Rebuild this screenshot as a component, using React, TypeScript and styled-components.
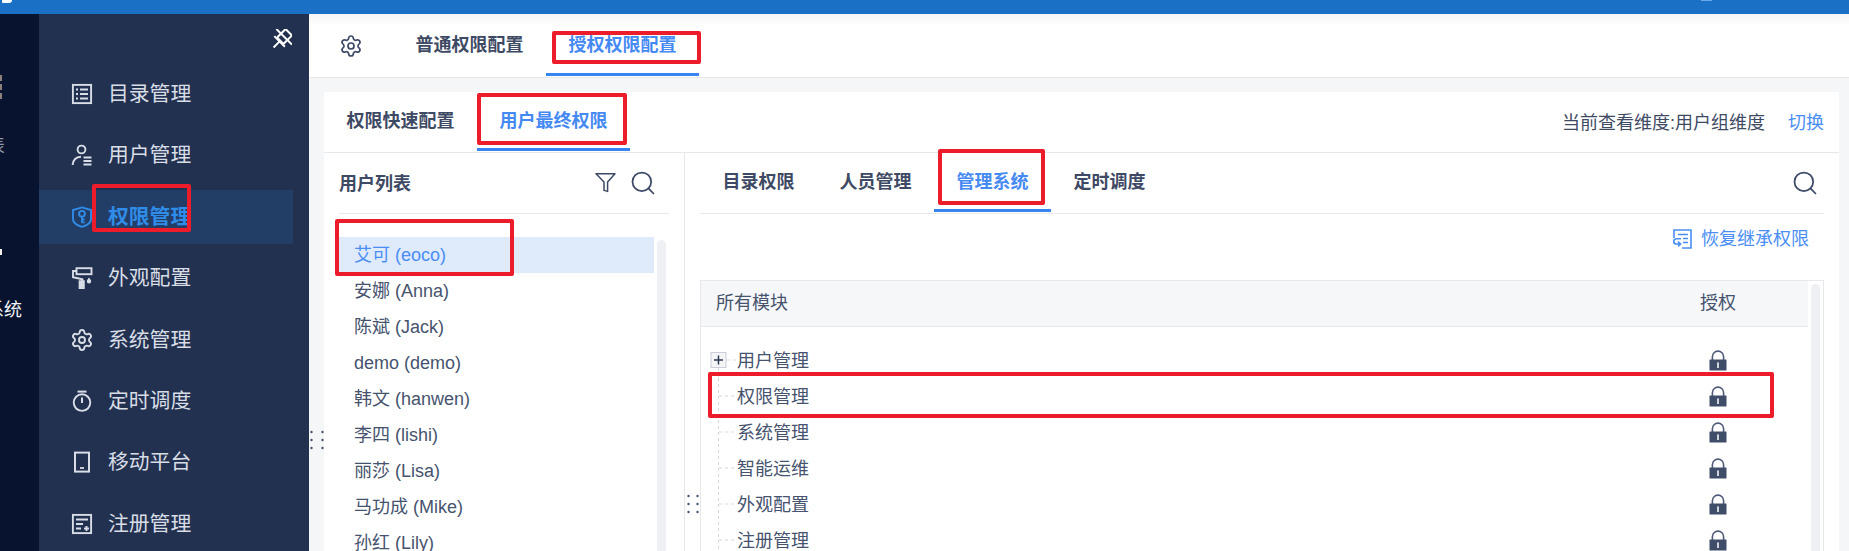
import type { FC, ReactNode } from 'react'
import { Search, Settings } from 'lucide-react'
import styled, { createGlobalStyle } from 'styled-components'

const GlobalStyle = createGlobalStyle`
  html, body {
    margin: 0;
    padding: 0;
    background: #fff;
  }
  * {
    box-sizing: border-box;
  }
`

const Page = styled.div`
  position: relative;
  display: flex;
  flex-direction: column;
  width: 1849px;
  height: 551px;
  overflow: hidden;
  font-family: "Liberation Sans", "Noto Sans CJK SC", sans-serif;
  font-size: 18px;
  line-height: 20px;
  color: #46536e;
`

const TopBar = styled.div`
  display: flex;
  justify-content: space-between;
  flex: 0 0 14px;
  padding: 0 137px 0 2px;
  background: #1a70c5;
`

const TopLogo = styled.div`
  width: 10px;
  height: 3px;
  background: #fff;
  border-radius: 0 0 6px 2px;
`

const TopAvatar = styled.div`
  width: 11px;
  height: 1px;
  background: #69a8ea;
`

const Body = styled.div`
  display: flex;
  flex: 1;
  min-height: 0;
`

const Rail = styled.div`
  display: flex;
  flex-direction: column;
  flex: 0 0 39px;
  overflow: hidden;
  background: #07132f;
`

const RailBars = styled.div`
  display: flex;
  flex-direction: column;
  gap: 3px;
  margin-top: 61px;
`

const RailBar = styled.div`
  width: 2px;
  height: 6px;
  background: #8d7f7c;
`

const RailLabel = styled.div<{ $top: number; $left: number; $color: string }>`
  margin-top: ${p => p.$top}px;
  margin-left: ${p => p.$left}px;
  line-height: 18px;
  white-space: nowrap;
  color: ${p => p.$color};
`

const RailDot = styled.div`
  width: 2px;
  height: 6px;
  margin-top: 94px;
  background: #f4f0e8;
`

const Sidebar = styled.div`
  display: flex;
  flex-direction: column;
  flex: 0 0 270px;
  background: #233150;
`

const PinRow = styled.div`
  display: flex;
  justify-content: flex-end;
  flex: 0 0 53px;
  padding: 15px 17px 0 0;
  color: #fff;
`

const NavItem = styled.div<{ $active?: boolean }>`
  display: flex;
  align-items: center;
  flex: 0 0 54px;
  width: 254px;
  margin-bottom: 7.4px;
  padding-left: 31px;
  font-size: 20.8px;
  font-weight: ${p => (p.$active ? 700 : 400)};
  color: ${p => (p.$active ? '#2f8ce8' : '#d8dde6')};
  background: ${p => (p.$active ? '#233e66' : 'transparent')};
`

const NavIcon = styled.span`
  display: flex;
  justify-content: center;
  flex: 0 0 24px;
  margin-right: 14px;
`

const Main = styled.div`
  display: flex;
  flex-direction: column;
  flex: 1;
  min-width: 0;
  background: #f5f6f8;
`

const MainHeader = styled.div`
  display: flex;
  flex: 0 0 64px;
  padding-left: 30px;
  border-bottom: 1px solid #e6e8ec;
  background: linear-gradient(#f5f5f5, #fff 12px);
`

const GearSlot = styled.div`
  display: flex;
  align-items: center;
  flex: 0 0 54px;
  height: 63px;
  padding-top: 1px;
  color: #3d4966;
`

const Tab = styled.div<{ $active?: boolean; $width?: number; $height: number }>`
  display: flex;
  align-items: center;
  justify-content: center;
  width: ${p => p.$width ?? 153}px;
  height: ${p => p.$height}px;
  padding-top: 2px;
  font-weight: 700;
  color: ${p => (p.$active ? '#4589f3' : '#3e4a64')};
  border-bottom: 3px solid ${p => (p.$active ? '#3685f2' : 'transparent')};
`

const ContentRow = styled.div`
  display: flex;
  flex: 1;
  min-height: 0;
  padding: 14px 10px 0 0;
`

const GripColumn = styled.div<{ $width: number; $top: number; $left: number }>`
  flex: 0 0 ${p => p.$width}px;
  padding: ${p => p.$top}px 0 0 ${p => p.$left}px;
  color: #46536e;
  background: #fff;
`

const GripOuter = styled(GripColumn)`
  background: transparent;
`

const Panel = styled.div`
  display: flex;
  flex-direction: column;
  flex: 1;
  min-width: 0;
  background: #fff;
`

const SubHeader = styled.div`
  display: flex;
  flex: 0 0 61px;
  border-bottom: 1px solid #e6e8ec;
`

const SubTabs = styled.div`
  display: flex;
`

const SubInfo = styled.div`
  display: flex;
  align-items: center;
  gap: 23px;
  height: 60px;
  margin-left: auto;
  padding: 2px 15px 0 0;
  color: #3e4a64;
`

const LinkText = styled.span`
  color: #4a8ef5;
`

const Split = styled.div`
  display: flex;
  flex: 1;
  min-height: 0;
`

const UserPane = styled.div`
  display: flex;
  flex-direction: column;
  flex: 0 0 361px;
  padding-left: 15px;
  border-right: 1px solid #e6e8ec;
`

const PaneHead = styled.div`
  display: flex;
  align-items: center;
  flex: 0 0 61px;
  width: 330px;
  padding-bottom: 1px;
  border-bottom: 1px solid #e6e8ec;
`

const PaneTitle = styled.span`
  padding-top: 3px;
  font-weight: 700;
  color: #3e4a64;
`

const HeadIcons = styled.div`
  display: flex;
  align-items: center;
  gap: 13px;
  margin-left: auto;
  padding-right: 12px;
  color: #3d4966;
`

const ListArea = styled.div`
  display: flex;
  flex: 1;
  min-height: 0;
  padding-top: 23px;
`

const UserList = styled.div`
  flex: 0 0 315px;
  overflow: hidden;
`

const UserRow = styled.div<{ $active?: boolean }>`
  display: flex;
  align-items: center;
  height: 36px;
  padding-left: 15px;
  color: ${p => (p.$active ? '#4a8ef5' : '#46536e')};
  background: ${p => (p.$active ? '#dfeafb' : 'transparent')};
`

const ScrollTrack = styled.div<{ $left: number; $top: number }>`
  flex: 0 0 9px;
  margin: ${p => p.$top}px 0 0 ${p => p.$left}px;
  border-radius: 5px 5px 0 0;
  background: #eef0f3;
`

const RightPane = styled.div`
  display: flex;
  flex-direction: column;
  flex: 0 0 1124px;
`

const RightHead = styled.div`
  display: flex;
  flex: 0 0 61px;
  border-bottom: 1px solid #e6e8ec;
`

const SearchSlot = styled.div`
  display: flex;
  align-items: center;
  height: 60px;
  margin-left: auto;
  padding-right: 5px;
  color: #3d4966;
`

const RestoreRow = styled.div`
  display: flex;
  align-items: center;
  justify-content: flex-end;
  gap: 9px;
  flex: 0 0 66px;
  padding: 0 15px 17px 0;
  color: #4a8ef5;
`

const ModuleTable = styled.div`
  display: flex;
  flex: 1;
  min-height: 0;
  border: 1px solid #e6e8ec;
  border-bottom: none;
`

const TableMain = styled.div`
  display: flex;
  flex-direction: column;
  flex: 0 0 1107px;
`

const TableHead = styled.div`
  display: flex;
  align-items: center;
  justify-content: space-between;
  flex: 0 0 46px;
  padding: 0 0 2px 15px;
  border-bottom: 1px solid #e6e8ec;
  background: #f6f7f9;
`

const AuthCell = styled.div`
  display: flex;
  align-items: center;
  justify-content: center;
  flex: 0 0 180px;
`

const TableRows = styled.div`
  flex: 1;
  padding-top: 15px;
  overflow: hidden;
`

const ModuleRow = styled.div`
  display: flex;
  align-items: center;
  height: 36px;
  padding-left: 9px;
`

const ModuleName = styled.span`
  flex: 1;
  padding-top: 2px;
`

const RedBox = styled.div<{ $x: number; $y: number; $w: number; $h: number }>`
  position: absolute;
  left: ${p => p.$x}px;
  top: ${p => p.$y}px;
  width: ${p => p.$w}px;
  height: ${p => p.$h}px;
  border: 4px solid #ed1c2a;
  border-radius: 2px;
  pointer-events: none;
`

const Svg: FC<{ size?: number; children: ReactNode }> = ({ size = 22, children }) => (
  <svg width={size} height={size} viewBox="0 0 22 22" fill="none" stroke="currentColor" strokeWidth="1.9">
    {children}
  </svg>
)

const CatalogIcon = () => (
  <Svg>
    <rect x="1.9" y="1.9" width="18.2" height="18.2" />
    <path d="M5 6.5h2M9 6.5h8M5 11h2M9 11h8M5 15.5h2M9 15.5h8" strokeWidth="2" />
  </Svg>
)

const UserIcon = () => (
  <Svg>
    <circle cx="10.5" cy="5.5" r="3.9" />
    <path d="M1.6 21c.5-5 3.6-8 8.4-8.2" />
    <path d="M12.5 13.5h8M12.5 17h8M12.5 20.5h8" strokeWidth="1.8" />
  </Svg>
)

const KeyShieldIcon = () => (
  <Svg>
    <path d="M11 1.4 20 4v9c0 4-4 6.4-9 7.8C6 19.4 2 17 2 13V4z" />
    <circle cx="11" cy="7.8" r="2.9" />
    <path d="M11 10.5v6.5M11 13.5h2.6M11 16.4h2.6" />
  </Svg>
)

const RollerIcon = () => (
  <Svg>
    <rect x="5.5" y="1.2" width="15" height="6" />
    <path d="M5.5 4H2v6.2l9.4 2v2" />
    <rect x="8.6" y="14.2" width="4.2" height="7" fill="currentColor" />
    <path d="M18 10.4c1.4 1.7 2.2 2.8 2.2 3.8a2.2 2.2 0 0 1-4.4 0c0-1 .8-2.1 2.2-3.8z" fill="currentColor" stroke="none" />
  </Svg>
)

const WatchIcon = () => (
  <Svg>
    <path d="M6.5 1.6h9" strokeWidth="2" />
    <circle cx="11" cy="12.6" r="8.3" />
    <path d="M11 7.5v5.6" strokeWidth="2" />
  </Svg>
)

const PhoneIcon = () => (
  <Svg>
    <rect x="4" y="1.6" width="14" height="19" strokeWidth="2" />
    <path d="M9 17h4" strokeWidth="1.8" />
  </Svg>
)

const FormIcon = () => (
  <Svg>
    <rect x="1.9" y="1.9" width="18.2" height="18.2" />
    <path d="M5 6.5h12M5 11h7M5 15.5h5M13 15.5h5M15.5 13v5" />
  </Svg>
)

const UnpinIcon = () => (
  <svg width="22" height="22" viewBox="0 0 22 22" fill="none" stroke="currentColor" strokeWidth="2">
    <g transform="rotate(45 11 11)">
      <rect x="6.5" y="0" width="9" height="12" rx="1" />
      <path d="M3.5 13h15M11 13v8.5M0 6.5h22" />
    </g>
  </svg>
)

const FunnelIcon = () => (
  <svg width="21" height="21" viewBox="0 0 21 21" fill="none" stroke="currentColor" strokeWidth="1.5">
    <path d="M1 1.8h19L12.6 10v9.4l-3.6-1V10z" strokeLinejoin="round" />
  </svg>
)

const RestoreIcon = () => (
  <svg width="19" height="20" viewBox="0 0 19 20" fill="none" stroke="currentColor" strokeWidth="1.6">
    <path d="M1 9V1h17v18H9" />
    <path d="M5 5.5h10M10 9.5h5M10 13.5h5" />
    <path d="M8 9.7H3.4a2.6 2.6 0 0 0 0 5.3H7M5 12.6 7.6 15 5 17.4" />
  </svg>
)

const LockIcon = () => (
  <svg width="18" height="21" viewBox="0 0 18 21">
    <path d="M3.4 10V6.7a5.6 5.6 0 0 1 11.2 0V10" fill="none" stroke="#4d5b78" strokeWidth="1.6" />
    <rect x="0.5" y="9.6" width="17" height="11" rx="0.6" fill="#3f4d68" />
    <rect x="8" y="12.4" width="2" height="5.6" fill="#cfd4dd" />
  </svg>
)

const GripDots: FC<{ gap: number }> = ({ gap }) => (
  <svg width={gap + 3} height="20" viewBox={`0 0 ${gap + 3} 20`} fill="currentColor">
    {[1.5, gap + 1.5].flatMap(cx => [2, 10, 18].map(cy => (
      <circle key={`${cx}-${cy}`} cx={cx} cy={cy} r="1.2" />
    )))}
  </svg>
)

const TreeLines: FC<{ root?: boolean }> = ({ root }) => (
  <svg width="27" height="36" viewBox="0 0 27 36" fill="none" style={{ flex: '0 0 27px' }}>
    {root ? (
      <>
        <path d="M8.5 26v10M17 18h10" stroke="#d3d7df" strokeDasharray="3 3" />
        <rect x="1" y="10.5" width="15" height="15" fill="#f4f5f7" stroke="#c9ced8" />
        <path d="M4 18h9M8.5 13.5v9" stroke="#2d3850" strokeWidth="1.5" />
      </>
    ) : (
      <path d="M8.5 0v36M9 18h18" stroke="#d3d7df" strokeDasharray="3 3" />
    )}
  </svg>
)

const navItems: { label: string; icon: ReactNode; active?: boolean }[] = [
  { label: '目录管理', icon: <CatalogIcon /> },
  { label: '用户管理', icon: <UserIcon /> },
  { label: '权限管理', icon: <KeyShieldIcon />, active: true },
  { label: '外观配置', icon: <RollerIcon /> },
  { label: '系统管理', icon: <Settings size={24} strokeWidth={1.9} /> },
  { label: '定时调度', icon: <WatchIcon /> },
  { label: '移动平台', icon: <PhoneIcon /> },
  { label: '注册管理', icon: <FormIcon /> },
]

const users = [
  '艾可 (eoco)',
  '安娜 (Anna)',
  '陈斌 (Jack)',
  'demo (demo)',
  '韩文 (hanwen)',
  '李四 (lishi)',
  '丽莎 (Lisa)',
  '马功成 (Mike)',
  '孙红 (Lily)',
]

const modules = ['用户管理', '权限管理', '系统管理', '智能运维', '外观配置', '注册管理']

const rightTabs = ['目录权限', '人员管理', '管理系统', '定时调度']

const App: FC = () => (
  <Page>
    <GlobalStyle />
    <TopBar>
      <TopLogo />
      <TopAvatar />
    </TopBar>
    <Body>
      <Rail>
        <RailBars>
          <RailBar />
          <RailBar />
          <RailBar />
        </RailBars>
        <RailLabel $top={38} $left={-13} $color="#8f96a6">表</RailLabel>
        <RailDot />
        <RailLabel $top={46} $left={-14} $color="#f2f5fa">系统</RailLabel>
      </Rail>
      <Sidebar>
        <PinRow>
          <UnpinIcon />
        </PinRow>
        {navItems.map(item => (
          <NavItem key={item.label} $active={item.active}>
            <NavIcon>{item.icon}</NavIcon>
            {item.label}
          </NavItem>
        ))}
      </Sidebar>
      <Main>
        <MainHeader>
          <GearSlot>
            <Settings size={24} strokeWidth={1.7} />
          </GearSlot>
          <Tab $height={62} $width={153}>普通权限配置</Tab>
          <Tab $height={62} $width={153} $active>授权权限配置</Tab>
        </MainHeader>
        <ContentRow>
          <GripOuter $width={15} $top={338} $left={1}>
            <GripDots gap={11} />
          </GripOuter>
          <Panel>
            <SubHeader>
              <SubTabs>
                <Tab $height={59} $width={153}>权限快速配置</Tab>
                <Tab $height={59} $width={153} $active>用户最终权限</Tab>
              </SubTabs>
              <SubInfo>
                <span>当前查看维度:用户组维度</span>
                <LinkText>切换</LinkText>
              </SubInfo>
            </SubHeader>
            <Split>
              <UserPane>
                <PaneHead>
                  <PaneTitle>用户列表</PaneTitle>
                  <HeadIcons>
                    <FunnelIcon />
                    <Search size={28} strokeWidth={1.5} />
                  </HeadIcons>
                </PaneHead>
                <ListArea>
                  <UserList>
                    {users.map((name, i) => (
                      <UserRow key={name} $active={i === 0}>{name}</UserRow>
                    ))}
                  </UserList>
                  <ScrollTrack $left={3} $top={3} />
                </ListArea>
              </UserPane>
              <GripColumn $width={15} $top={341} $left={2}>
                <GripDots gap={9} />
              </GripColumn>
              <RightPane>
                <RightHead>
                  {rightTabs.map((tab, i) => (
                    <Tab key={tab} $height={59} $width={117} $active={i === 2}>{tab}</Tab>
                  ))}
                  <SearchSlot>
                    <Search size={28} strokeWidth={1.5} />
                  </SearchSlot>
                </RightHead>
                <RestoreRow>
                  <RestoreIcon />
                  恢复继承权限
                </RestoreRow>
                <ModuleTable>
                  <TableMain>
                    <TableHead>
                      <span>所有模块</span>
                      <AuthCell>授权</AuthCell>
                    </TableHead>
                    <TableRows>
                      {modules.map((name, i) => (
                        <ModuleRow key={name}>
                          <TreeLines root={i === 0} />
                          <ModuleName>{name}</ModuleName>
                          <AuthCell><LockIcon /></AuthCell>
                        </ModuleRow>
                      ))}
                    </TableRows>
                  </TableMain>
                  <ScrollTrack $left={3} $top={3} />
                </ModuleTable>
              </RightPane>
            </Split>
          </Panel>
        </ContentRow>
      </Main>
    </Body>
    <RedBox $x={92} $y={184} $w={99} $h={48} />
    <RedBox $x={552} $y={31} $w={149} $h={33} />
    <RedBox $x={477} $y={93} $w={150} $h={52} />
    <RedBox $x={335} $y={219} $w={179} $h={57} />
    <RedBox $x={938} $y={149} $w={107} $h={56} />
    <RedBox $x={708} $y={372} $w={1066} $h={46} />
  </Page>
)

export default App
